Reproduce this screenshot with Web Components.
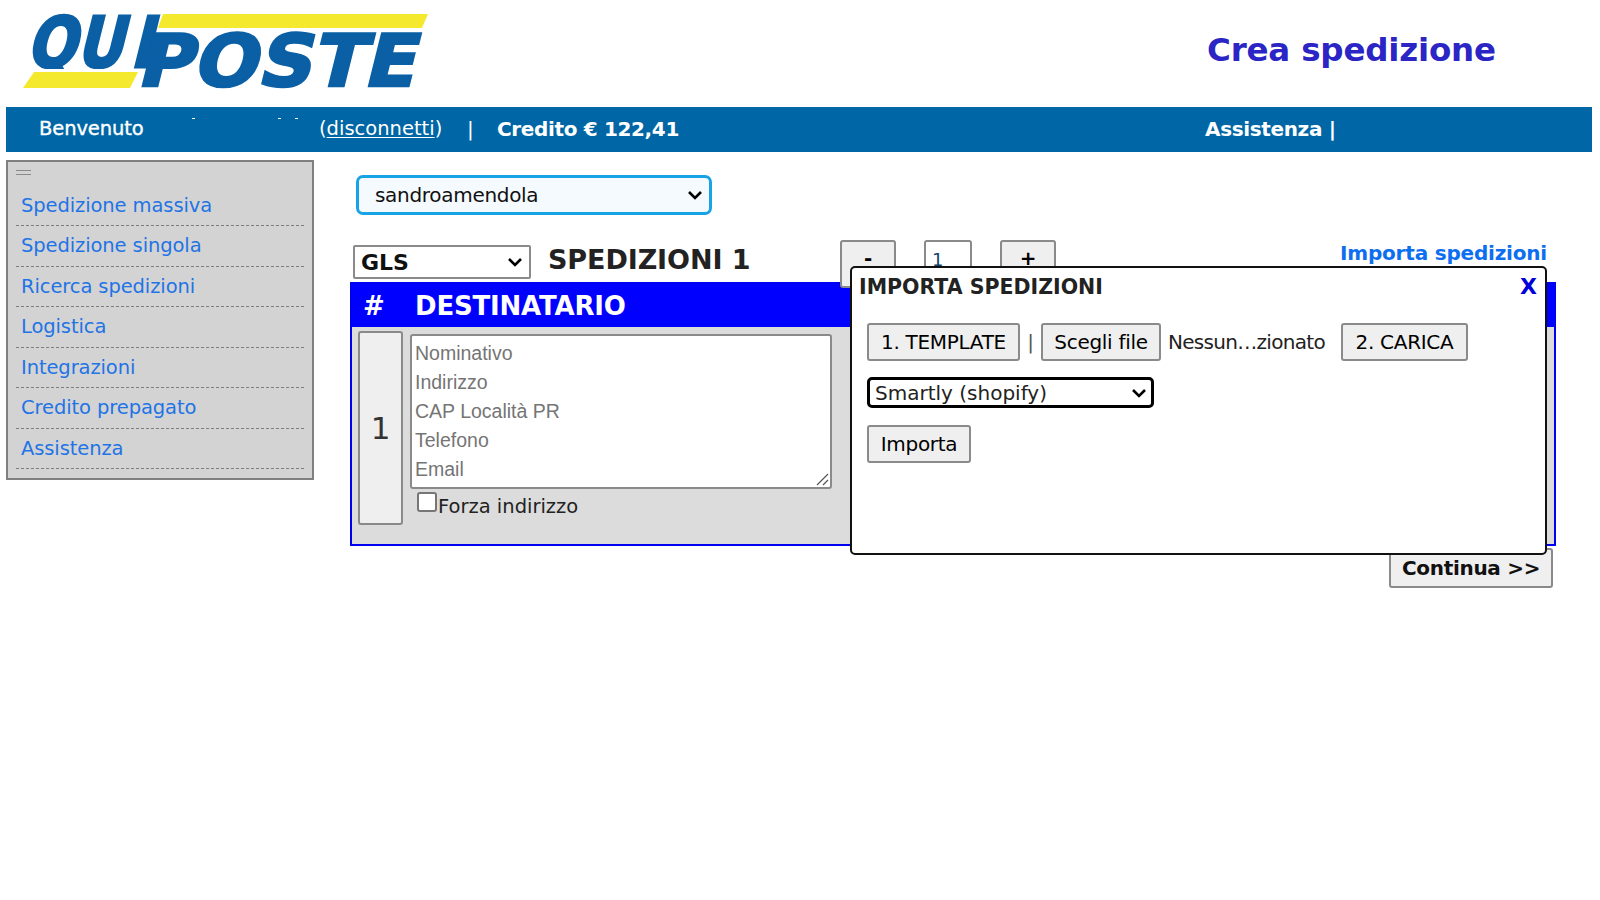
<!DOCTYPE html>
<html lang="it"><head><meta charset="utf-8"><title>Crea spedizione</title>
<style>
html,body{margin:0;padding:0;background:#fff;font-family:"DejaVu Sans",sans-serif;}
</style></head><body>
<qp-app></qp-app>
<script>
const F='"DejaVu Sans",Verdana,sans-serif';
const ARW=`url("data:image/svg+xml,%3Csvg xmlns='http://www.w3.org/2000/svg' width='16' height='16'%3E%3Cpath d='M2 5l6 6 6-6' fill='none' stroke='%23000' stroke-width='2.6'/%3E%3C/svg%3E") no-repeat`;
function def(name,html,setup){
  customElements.define(name,class extends HTMLElement{
    constructor(){super();const r=this.attachShadow({mode:'open'});r.innerHTML=html;}
    connectedCallback(){if(setup)setup(this)}
  });
}
def('qp-logo',`<style>:host{display:block;width:410px;height:80px}svg{display:block;margin:-13px 0 -16px -20px}
text{font-family:"DejaVu Sans",sans-serif;font-weight:700;fill:#0a5fa5;stroke:#0a5fa5;}</style>
<svg width="430" height="109" viewBox="-20 -13 430 109">
<polygon points="140,0 405,0 399,14 135,14" fill="#f5e92e"/>
<text transform="translate(3,53) skewX(-14) scale(.83,1)" font-size="70" stroke-width="2.8">QU<tspan dx="9">I</tspan></text>
<rect x="-5" y="55" width="123" height="4" fill="#fff"/>
<polygon points="11,58 115,58 107,74 0,74" fill="#f5e92e"/>
<text transform="translate(113,72) skewX(-14)" font-size="72" textLength="278" lengthAdjust="spacingAndGlyphs" stroke-width="2.5">POSTE</text>
</svg>`);
def('qp-header',`<style>:host{display:flex;align-items:center;height:107px;box-sizing:border-box;padding:0 0 0 23px}
.t{margin-left:774px;width:290px;font:700 32.5px ${F};color:#2a25c4;white-space:nowrap;position:relative;top:-4px;letter-spacing:-.2px}
</style><qp-logo></qp-logo><div class="t">Crea spedizione</div>`);
def('qp-bar',`<style>:host{display:flex;align-items:center;height:45px;margin:0 8px 0 6px;background:#0066a5;color:#fff;font:700 20px ${F};white-space:nowrap;position:relative}
span{display:block;letter-spacing:-.35px;position:relative;top:-1px}
.a{margin-left:33px;width:280px;font-weight:400;font-size:19.5px;-webkit-text-stroke:.35px #fff;letter-spacing:-.1px}.d{font-weight:400;font-size:19.5px;width:148px;letter-spacing:0}.d u{text-underline-offset:2px}
.s{font-weight:400;width:30px}.c{width:708px}
.k{position:absolute;top:11px;height:1px;background:#fff;width:3px}
</style>
<span class="a">Benvenuto</span><span class="d">(<u>disconnetti</u>)</span><span class="s">|</span><span class="c">Credito € 122,41</span><span>Assistenza |</span>
<i class="k" style="left:186px"></i><i class="k" style="left:272px"></i><i class="k" style="left:289px"></i>`);
def('qp-menu-item',`<style>:host{display:block;height:39.5px;box-sizing:border-box;border-bottom:1px dashed #7d7d7d;padding:0 0 0 5px;margin-bottom:1px;font:400 19.5px/38px ${F};color:#1f74e6;white-space:nowrap;letter-spacing:-.1px}
</style><slot></slot>`);
def('qp-sidebar',`<style>:host{display:block;width:308px;height:320px;box-sizing:border-box;background:#d3d3d3;border:2px solid #808080;padding:8px 8px 0 8px;flex:none}
.h{width:15px;height:5px;border-top:1px solid #8a8a8a;border-bottom:1px solid #8a8a8a;box-sizing:border-box;margin-bottom:11.5px}
</style><div class="h"></div><slot></slot>`);
const btn=`button{box-sizing:border-box;background:#efefef;border:2px solid #8a8a8a;border-radius:3px;color:#000;font:400 20px ${F};padding:0;white-space:nowrap;letter-spacing:-.3px}`;
def('qp-table',`<style>:host{display:block;width:1206px;height:264px;box-sizing:border-box;border:2px solid #0000f0;background:#dcdcdc}
.h{display:flex;align-items:center;height:43px;background:#0000ff;color:#fff;font:700 26px ${F};letter-spacing:-.2px}
.h b:first-child{width:63px;padding-left:11px;box-sizing:border-box}
.r{display:flex;padding:4px 0 0 6px;gap:7px}
${btn}
.n{width:45px;height:194px;font-size:31px;color:#333}
.f{position:relative}
.ta{width:422px;height:155px;margin-top:3px;box-sizing:border-box;background:#fff;border:2px solid #8a8a8a;border-radius:3px;font:400 19.5px/29px "Liberation Sans",sans-serif;color:#757575;padding:3px 3px;position:relative}
.ta svg{position:absolute;right:1px;bottom:1px}
.ck{display:flex;align-items:flex-end;padding-left:7px;font:400 19.5px ${F};height:28px;letter-spacing:0;color:#222}
.ck i{display:block;width:20px;height:20px;box-sizing:border-box;border:2px solid #767676;border-radius:3px;background:#fff;margin:0 1px 5px 0}
.ck span{position:relative;top:1px}
</style>
<div class="h"><b>#</b><b>DESTINATARIO</b></div>
<div class="r"><button class="n">1</button>
<div class="f"><div class="ta">Nominativo<br>Indirizzo<br>CAP Località PR<br>Telefono<br>Email
<svg width="14" height="14" viewBox="0 0 14 14"><path d="M2 13 13 2M8 13l5-5" stroke="#555" stroke-width="1.2" fill="none"/></svg></div>
<label class="ck"><i></i><span>Forza indirizzo</span></label></div></div>`);
def('qp-modal',`<style>:host{display:block;position:absolute;left:500px;top:106px;width:697px;height:289px;box-sizing:border-box;background:#fff;border:2px solid #111;border-radius:5px;padding:0 0 0 15px}
${btn}
.t{display:flex;justify-content:space-between;align-items:center;height:37px;margin-left:-8px;padding-right:8px;font:700 20.5px ${F};color:#222;letter-spacing:0}
.t a{color:#0000d8;font-size:22px}
.l{display:flex;align-items:center;margin-top:18px;height:38px;font:400 20px ${F};color:#222;letter-spacing:-.4px}
button{height:38px}
.p{width:21px;text-align:center;color:#555}
.nf{width:180px;padding-left:7px;box-sizing:border-box;white-space:nowrap;letter-spacing:-.7px}
select{appearance:none;-webkit-appearance:none;display:block;box-sizing:border-box;width:287px;height:31px;margin-top:16px;border:3px solid #000;border-radius:5px;background:#fff ${ARW} right 4px center;font:400 20px ${F};color:#222;padding:0 0 0 5px;letter-spacing:0}
.i{display:block;margin-top:17px}
</style>
<div class="t"><span>IMPORTA SPEDIZIONI</span><a>X</a></div>
<div class="l"><button style="width:153px">1. TEMPLATE</button><span class="p">|</span><button style="width:120px">Scegli file</button><span class="nf">Nessun…zionato</span><button style="width:127px">2. CARICA</button></div>
<select><option>Smartly (shopify)</option></select>
<button class="i" style="width:104px">Importa</button>`);
def('qp-main',`<style>:host{display:block;position:relative;flex:1;margin-left:36px;padding-top:15px}
${btn}
select{appearance:none;-webkit-appearance:none}
.u{display:block;width:356px;height:40px;box-sizing:border-box;margin-left:6px;background:#f5fafe ${ARW} right 6px center;border:3px solid #18a3e4;border-radius:7px;font:400 20px ${F};color:#111;padding:0 0 0 16px;letter-spacing:-.3px}
.row{display:flex;align-items:flex-start;margin-top:21px;position:relative;padding-top:4px;box-sizing:content-box;height:42px}
.g{width:178px;height:34px;margin:5px 17px 0 3px;box-sizing:border-box;background:#fff ${ARW} right 6px center;border:2px solid #8a8a8a;border-radius:2px;font:700 22px ${F};color:#111;padding:0 0 0 6px}
.s{font:700 27px/36px ${F};color:#222;margin-top:2px;width:292px;white-space:nowrap;letter-spacing:-.1px}
.ctl{height:48px;font-size:20px;font-weight:700;padding-bottom:12px}
.in{width:48px;height:48px;box-sizing:border-box;border:2px solid #8a8a8a;border-radius:3px;background:#fff;font:400 18px ${F};padding:7px 0 0 6px;color:#146;margin:0 28px}
.imp{margin-left:auto;margin-right:53px;margin-top:-1px;font:700 20px/28px ${F};color:#0d6ff0;letter-spacing:-.2px;white-space:nowrap}
.foot{display:flex;justify-content:flex-end;padding-right:47px;margin-top:2px}
.go{width:164px;height:40px;font:700 20px ${F};color:#111}
</style>
<select class="u"><option>sandroamendola</option></select>
<div class="row"><select class="g"><option>GLS</option></select><div class="s">SPEDIZIONI 1</div>
<button class="ctl" style="width:56px">-</button><div class="in">1</div><button class="ctl" style="width:56px">+</button>
<span class="imp">Importa spedizioni</span></div>
<qp-table></qp-table>
<div class="foot"><button class="go">Continua &gt;&gt;</button></div>
<qp-modal></qp-modal>`);
def('qp-app',`<style>:host{display:block;width:1600px;height:900px;overflow:hidden}
.b{display:flex;padding:8px 0 0 6px}</style>
<qp-header></qp-header><qp-bar></qp-bar>
<div class="b"><qp-sidebar>
<qp-menu-item>Spedizione massiva</qp-menu-item><qp-menu-item>Spedizione singola</qp-menu-item><qp-menu-item>Ricerca spedizioni</qp-menu-item><qp-menu-item>Logistica</qp-menu-item><qp-menu-item>Integrazioni</qp-menu-item><qp-menu-item>Credito prepagato</qp-menu-item><qp-menu-item>Assistenza</qp-menu-item>
</qp-sidebar><qp-main></qp-main></div>`);
</script>
</body></html>
